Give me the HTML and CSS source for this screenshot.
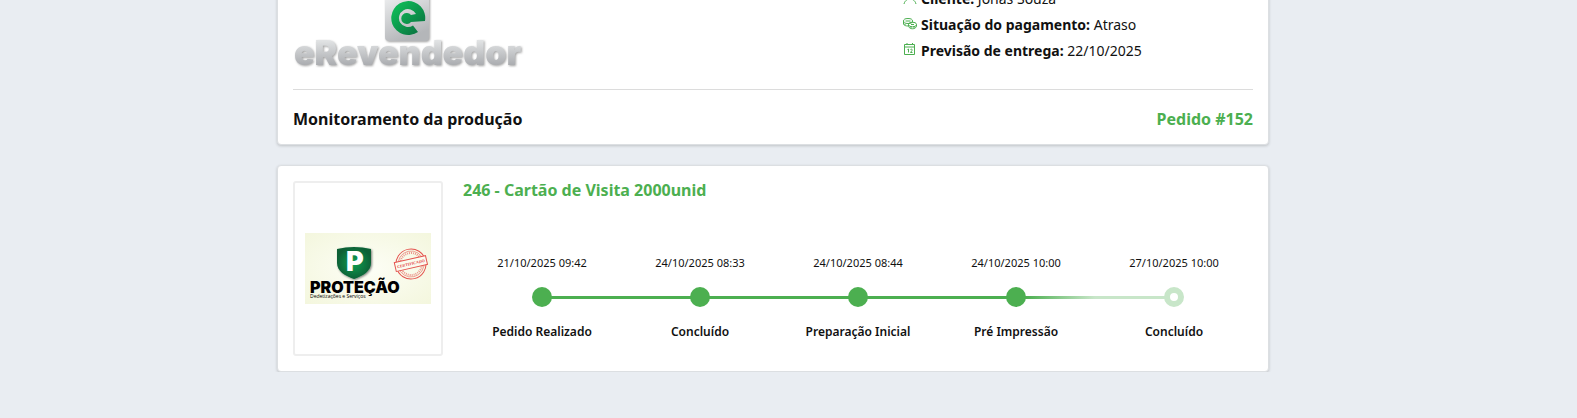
FILE: index.html
```html
<!DOCTYPE html>
<html lang="pt-BR">
<head>
<meta charset="utf-8">
<title>Monitoramento da produção</title>
<link rel="stylesheet" href="styles.css">
</head>
<body>
<main class="page">
  <header class="card order">
    <div class="order-top">
      <svg class="brand" viewBox="0 0 230 110" role="img" aria-label="eRevendedor">
        <defs>
          <linearGradient id="silver" x1="0" y1="0" x2="0.4" y2="1"><stop offset="0" stop-color="#f1f2f3"/><stop offset="1" stop-color="#b4b6b9"/></linearGradient>
          <linearGradient id="word" x1="0" y1="0" x2="0" y2="1"><stop offset="0.2" stop-color="#e2e4e5"/><stop offset="0.9" stop-color="#a2a4a8"/></linearGradient>
          <linearGradient id="leaf" x1="0" y1="0" x2="1" y2="1"><stop offset="0.2" stop-color="#0eb455"/><stop offset="0.9" stop-color="#0b7341"/></linearGradient>
          <filter id="soft" x="-10%" y="-10%" width="120%" height="130%"><feDropShadow dx="1" dy="1" stdDeviation="1" flood-color="#777" flood-opacity="0.7"/></filter>
        </defs>
        <rect x="92" y="33" width="44" height="48" rx="4" fill="url(#silver)" filter="url(#soft)"/>
        <path d="M132 61A17 17 0 1 0 125 72L120 65.500A9 9 0 1 1 123 54L118 55A5.500 5.500 0 1 0 118 62Z" fill="url(#leaf)"/>
        <text class="brand-text" x="1" y="105" fill="url(#word)" filter="url(#soft)">eRevendedor</text>
      </svg>
      <ul class="facts">
        <li>
          <svg class="icon" viewBox="0 0 14 14" aria-hidden="true"><circle cx="7" cy="4" r="3"/><path d="M1 13C2 9 5 8 7 8S12 9 13 13"/></svg>
          <span><strong>Cliente:</strong> Jonas Souza</span>
        </li>
        <li>
          <svg class="icon" viewBox="0 0 14 14" aria-hidden="true"><ellipse cx="5" cy="4" rx="4.500" ry="2.500"/><path d="M.5 4V7C1 8.500 3 9 5 9M9.500 4V5.500M2.500 4H7.500M2 7V8"/><ellipse cx="9.500" cy="7.500" rx="4" ry="2.300"/><path d="M5.500 7.500V9.500C7 12.500 12 12.500 13.500 9.500V7.500M8 9.500V11.500M11 9.500V11.500M8 7.500H11"/></svg>
          <span><strong>Situação do pagamento:</strong> Atraso</span>
        </li>
        <li>
          <svg class="icon" viewBox="0 0 14 14" aria-hidden="true"><path d="M1.500 1.500H11.500V11.500H1.500ZM1.500 4H11.500M4 0V2M9.500 0V2M4.500 6.500L5.500 6V9.500M7.500 6.500C8.500 5.500 9.500 6.500 9 7.500L7.500 9.500H9.500"/></svg>
          <span><strong>Previsão de entrega:</strong> 22/10/2025</span>
        </li>
      </ul>
    </div>
    <div class="order-bottom">
      <h1 class="heading">Monitoramento da produção</h1>
      <span class="heading accent">Pedido #152</span>
    </div>
  </header>

  <section class="card product">
    <div class="thumb">
      <svg class="thumb-art" viewBox="0 0 126 71" role="img" aria-label="Proteção Dedetizações e Serviços">
        <defs>
          <radialGradient id="paper" r="0.75"><stop offset="0" stop-color="#fdfef6"/><stop offset="1" stop-color="#f3f6dc"/></radialGradient>
          <radialGradient id="shield"><stop offset="0" stop-color="#11a052"/><stop offset="1" stop-color="#086136"/></radialGradient>
          <filter id="shade" x="-20%" y="-20%" width="150%" height="150%"><feDropShadow dx="1" dy="1" stdDeviation="1" flood-opacity="0.5"/></filter>
        </defs>
        <rect width="126" height="71" fill="url(#paper)"/>
        <path d="M32 16Q49 12 66 16V30C66 38 58 43 49 46C40 43 32 38 32 30Z" fill="url(#shield)" filter="url(#shade)"/>
        <text class="art-p" x="41" y="38">P</text>
        <text class="art-name" x="5" y="60">PROTEÇÃO</text>
        <text class="art-sub" x="5" y="65">Dedetizações e Serviços</text>
        <g class="stamp" transform="rotate(-13 106 31)">
          <circle cx="106" cy="31" r="15"/><circle class="thin" cx="106" cy="31" r="13"/>
          <circle class="lettering" cx="106" cy="31" r="11"/>
          <rect x="90" y="26" width="32" height="9"/>
          <text class="stamp-text" x="106" y="32">CERTIFICADO</text>
        </g>
      </svg>
    </div>
    <div class="details">
      <h2 class="heading accent">246 - Cartão de Visita 2000unid</h2>
      <ol class="timeline">
        <li class="step"><time>21/10/2025 09:42</time><span class="dot"></span><strong>Pedido Realizado</strong></li>
        <li class="step"><time>24/10/2025 08:33</time><span class="dot"></span><strong>Concluído</strong></li>
        <li class="step"><time>24/10/2025 08:44</time><span class="dot"></span><strong>Preparação Inicial</strong></li>
        <li class="step current"><time>24/10/2025 10:00</time><span class="dot"></span><strong>Pré Impressão</strong></li>
        <li class="step pending"><time>27/10/2025 10:00</time><span class="dot"></span><strong>Concluído</strong></li>
      </ol>
    </div>
  </section>
</main>
</body>
</html>
```
FILE: styles.css
```css
* { box-sizing: border-box; }
body {
  margin: 0;
  padding-right: 31px;
  background: #e9edf2;
  color: #111;
  font-family: "Noto Sans", sans-serif;
  font-size: 14px;
}
.page { max-width: 992px; margin: -56px auto 0; display: flex; flex-direction: column; gap: 20px; }
.card { background: #fff; border: 1px solid #dcdfe2; border-radius: 4px; padding: 15px; box-shadow: 0 1px 3px rgba(0, 0, 0, 0.18); }
.order { padding-bottom: 14px; }
.order-top { display: flex; justify-content: space-between; height: 130px; border-bottom: 1px solid #dcdcdc; }
.brand { width: 230px; height: 110px; overflow: visible; }
.brand-text { font: 900 34px Inter, sans-serif; }
.facts { width: 350px; margin: 0; padding: 25px 0 0; list-style: none; }
.facts li { display: flex; align-items: center; gap: 4px; height: 26px; }
.icon { width: 14px; height: 14px; fill: none; stroke: #4caf50; stroke-width: 1; }
.order-bottom { display: flex; justify-content: space-between; align-items: center; padding: 18px 0 0; }
.heading { margin: 0; font-size: 16px; line-height: 22px; font-weight: 700; }
.details .heading { line-height: 18px; }
.accent { color: #4caf50; }
.product { display: flex; gap: 20px; }
.thumb { flex: none; width: 150px; height: 175px; padding: 10px; border: 2px solid #eee; border-radius: 3px; display: flex; align-items: center; }
.thumb-art { width: 100%; }
.art-p { font: 900 27px Inter, sans-serif; fill: #fff; }
.art-name { font: 900 16px Inter, sans-serif; }
.art-sub { font: 5px "Open Sans", sans-serif; }
.stamp { fill: none; stroke: #e4534e; stroke-width: 1; }
.stamp rect { fill: #fbfbef; }
.stamp .thin { stroke-width: 0.5; }
.stamp .lettering { stroke-width: 2; stroke-dasharray: 1 1; opacity: 0.6; }
.stamp-text { font: 700 4px "Liberation Serif", serif; fill: #e4413d; stroke: none; text-anchor: middle; }
.details { flex: 1; }
.timeline { display: flex; margin: 0; padding: 55px 0 0; list-style: none; }
.step { position: relative; flex: 1; display: flex; flex-direction: column; align-items: center; font-size: 12px; line-height: 18px; }
.step time { font-size: 11px; }
.step strong { font-weight: 600; }
.dot { width: 20px; height: 20px; margin: 15px 0 16px; border-radius: 50%; background: #4caf50; }
.step:not(:last-child)::after { content: ""; position: absolute; top: 42px; left: calc(50% + 9px); width: calc(100% - 18px); height: 3px; background: #4caf50; }
.current:not(:last-child)::after { background: linear-gradient(to right, #4caf50, #c8e6c9 50%); }
.pending .dot { background: #fff; border: 6px solid #c8e6c9; }
```
